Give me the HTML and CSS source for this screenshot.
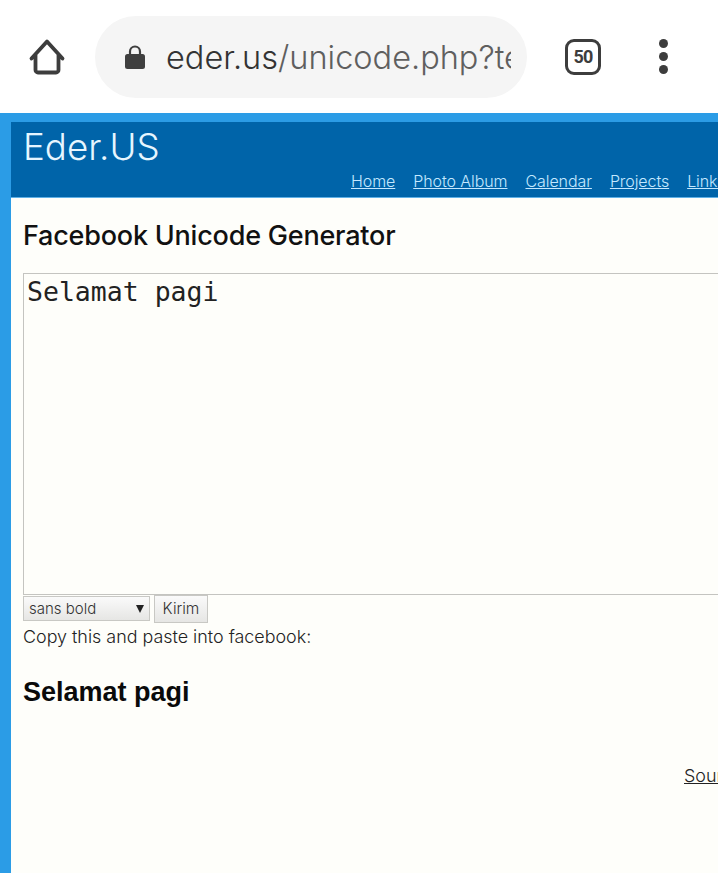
FILE: index.html
```html
<!DOCTYPE html>
<html lang="id">
<head>
<meta charset="utf-8">
<title>Facebook Unicode Generator</title>
<link rel="stylesheet" href="styles.css">
</head>
<body>
<div class="toolbar">
  <svg class="home" viewBox="0 0 38 38" width="38" height="38"><path d="M3.500 20.500 19 3.500l15.500 17M7.500 17v15a2.500 2.500 0 0 0 2.500 2.500h18a2.500 2.500 0 0 0 2.500-2.500V17" fill="none" stroke="#3d3d3d" stroke-width="3.800" stroke-linecap="round" stroke-linejoin="round"/></svg>
  <div class="omnibox">
    <svg class="lock" viewBox="0 0 22 26" width="22" height="26"><path d="M6 11V7.500a5 5 0 0 1 10 0V11" fill="none" stroke="#3f3f3f" stroke-width="2.200"/><rect x="1" y="10" width="20" height="15" rx="2.500" fill="#3f3f3f"/></svg>
    <div class="url"><span class="host">eder.us</span>/unicode.php?text=Selamat</div>
  </div>
  <div class="tabs">50</div>
  <div class="menu"><i></i><i></i><i></i></div>
</div>
<div class="page">
  <header class="banner">
    <div class="brand">Eder.US</div>
    <nav class="nav">
      <a href="#">Home</a><a href="#">Photo Album</a><a href="#">Calendar</a><a href="#">Projects</a><a href="#">Links</a>
    </nav>
  </header>
  <main class="content">
    <h1 class="title">Facebook Unicode Generator</h1>
    <textarea class="input" spellcheck="false">Selamat pagi</textarea>
    <div class="controls">
      <div class="select">sans bold<span class="arrow"></span></div>
      <div class="button">Kirim</div>
    </div>
    <p class="hint">Copy this and paste into facebook:</p>
    <p class="result">Selamat pagi</p>
    <div class="source"><a href="#">Source</a></div>
  </main>
</div>
</body>
</html>
```
FILE: styles.css
```css
html, body {
  margin: 0;
  padding: 0;
  width: 718px;
  height: 873px;
  overflow: hidden;
  background: #fff;
  font-family: Inter, "Liberation Sans", sans-serif;
}
.toolbar {
  box-sizing: border-box;
  height: 113px;
  background: #fff;
  display: flex;
  align-items: center;
  padding: 0 0 0 28px;
}
.home { flex: none; margin-right: 29px; margin-top: 0; }
.omnibox {
  flex: none;
  box-sizing: border-box;
  width: 432px;
  height: 82px;
  border-radius: 41px;
  background: #f5f5f5;
  display: flex;
  align-items: center;
  padding: 0 16px 0 29px;
}
.lock { flex: none; margin-right: 20px; }
.url {
  flex: 1;
  min-width: 0;
  overflow: hidden;
  white-space: nowrap;
  padding-top: 2px;
  font-size: 32.500px;
  font-weight: 300;
  color: #5f5f5f;
}
.host { color: #333; }
.tabs {
  flex: none;
  box-sizing: border-box;
  width: 36px;
  height: 36px;
  margin-left: 38px;
  border: 3.500px solid #3d3d3d;
  border-radius: 9px;
  display: flex;
  align-items: center;
  justify-content: center;
  font-family: "Roboto", sans-serif;
  font-size: 18px;
  font-weight: 700;
  letter-spacing: -0.8px;
  color: #3d3d3d;
}
.menu {
  flex: none;
  margin-left: 58px;
  display: flex;
  flex-direction: column;
  gap: 4px;
}
.menu i {
  display: block;
  width: 9px;
  height: 9px;
  border-radius: 50%;
  background: #3d3d3d;
}
.page {
  box-sizing: border-box;
  height: 760px;
  background: #2b9ce6;
  padding: 9px 0 0 11px;
}
.banner {
  box-sizing: border-box;
  height: 76px;
  background: #0064a9;
  border-bottom: 1px solid #5fb0e6;
  padding: 5px 0 0 12px;
  white-space: nowrap;
  overflow: hidden;
}
.brand {
  font-size: 36.700px;
  line-height: 40px;
  font-weight: 300;
  color: #e6f6ff;
}
.nav {
  display: flex;
  gap: 18px;
  margin-top: 4px;
  margin-left: 328px;
  font-size: 16px;
  line-height: 20px;
  letter-spacing: -0.08px;
}
.nav a { color: #c4e8ff; text-decoration: underline; font-weight: 300; }
.content {
  box-sizing: border-box;
  height: 675px;
  background: #fefefa;
  padding: 22px 0 0 12px;
  overflow: hidden;
}
.title {
  margin: 0;
  font-size: 27px;
  line-height: 32px;
  font-weight: 450;
  letter-spacing: -0.21px;
  color: #111;
  white-space: nowrap;
}
.input {
  display: block;
  box-sizing: border-box;
  width: 760px;
  height: 322px;
  margin: 21px 0 0;
  padding: 1px 3px;
  border: 1px solid #c4c4c0;
  background: #fefefa;
  font-family: "DejaVu Sans Mono", monospace;
  font-size: 26.500px;
  line-height: 33px;
  color: #222;
  resize: none;
  outline: none;
}
.controls {
  display: flex;
  align-items: flex-start;
  gap: 4px;
}
.select, .button {
  box-sizing: border-box;
  font-size: 15px;
  font-weight: 300;
  color: #333;
  background: linear-gradient(#fafafa, #e6e6e4);
  border: 1px solid #c8c8c4;
}
.select {
  width: 127px;
  height: 25px;
  margin-top: 1px;
  padding-left: 5px;
  line-height: 24px;
  display: flex;
  justify-content: space-between;
  align-items: center;
}
.arrow {
  width: 0;
  height: 0;
  margin-right: 5px;
  border-left: 4px solid transparent;
  border-right: 4px solid transparent;
  border-top: 8px solid #222;
}
.button {
  width: 54px;
  height: 28px;
  font-size: 15.500px;
  line-height: 26px;
  text-align: center;
}
.hint {
  margin: 2px 0 0;
  font-size: 17.900px;
  line-height: 24px;
  font-weight: 300;
  color: #222;
  white-space: nowrap;
}
.result {
  margin: 27px 0 0;
  font-family: "Liberation Sans", sans-serif;
  font-size: 27px;
  line-height: 32px;
  font-weight: 700;
  color: #0a0a0a;
  white-space: nowrap;
}
.source {
  margin: 56px 0 0 661px;
  font-size: 17.900px;
  line-height: 24px;
  font-weight: 300;
  white-space: nowrap;
}
.source a { color: #222; text-decoration: underline; }
```
